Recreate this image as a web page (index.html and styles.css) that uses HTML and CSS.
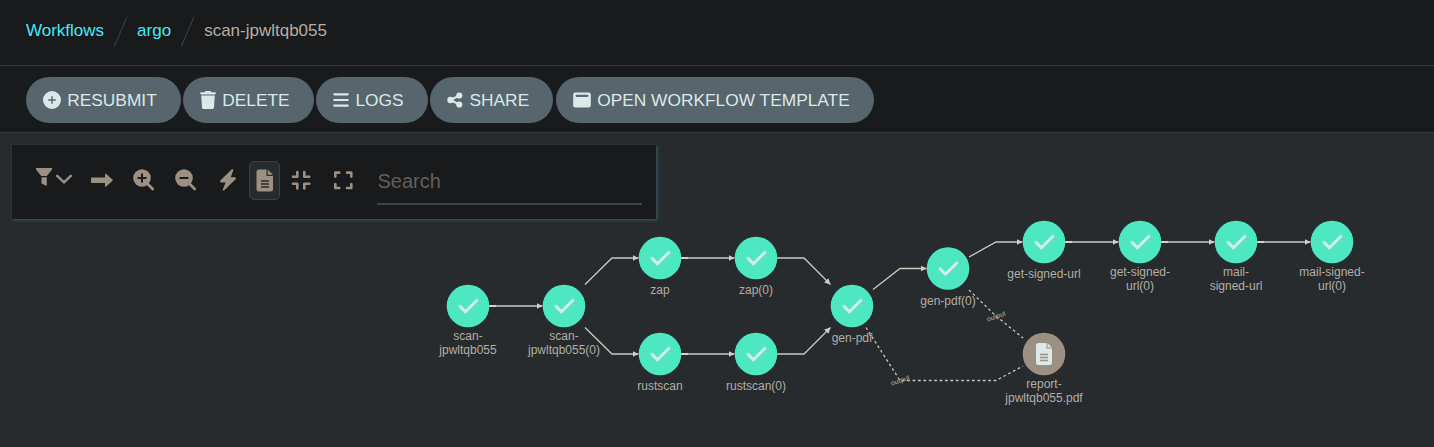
FILE: index.html
```
<!DOCTYPE html>
<html lang="en">
<head>
<meta charset="utf-8">
<title>Workflow scan-jpwltqb055</title>
<link rel="stylesheet" href="styles.css">
</head>
<body>
<header class="breadcrumbs">
  <a class="crumb crumb-link">Workflows</a>
  <svg class="slash" width="14" height="31" viewBox="0 0 14 31"><path d="M0 30 13 0"/></svg>
  <a class="crumb crumb-link">argo</a>
  <svg class="slash" width="14" height="31" viewBox="0 0 14 31"><path d="M0 30 13 0"/></svg>
  <span class="crumb">scan-jpwltqb055</span>
</header>
<nav class="actions">
  <button class="btn btn-resubmit"><svg width="18" height="18" viewBox="0 0 512 512"><path fill-rule="evenodd" d="M256 0a256 256 0 1 0 0 512A256 256 0 1 0 256 0zM236 160q0-16 20-16t20 16v76h76q16 0 16 20t-16 20h-76v76q0 16-20 16t-20-16v-76h-76q-16 0-16-20t16-20h76z"/></svg>RESUBMIT</button>
  <button class="btn btn-delete"><svg width="16" height="18" viewBox="0 0 448 512"><path d="M135.200 17.700L128 32H32C14.300 32 0 46.300 0 64S14.300 96 32 96H416c17.700 0 32-14.300 32-32s-14.300-32-32-32H320l-7.200-14.300C307.400 6.800 296.300 0 284.200 0H163.800c-12.100 0-23.200 6.800-28.600 17.700zM416 128H32L53.200 467c1.600 25.300 22.600 45 47.900 45H346.900c25.300 0 46.300-19.700 47.900-45L416 128z"/></svg>DELETE</button>
  <button class="btn btn-logs"><svg width="16" height="18" viewBox="0 0 16 18"><path d="M1.300 3.300h13.400M1.300 9h13.400M1.300 14.700h13.400" fill="none" stroke="currentColor" stroke-width="2.200" stroke-linecap="round"/></svg>LOGS</button>
  <button class="btn btn-share"><svg width="16" height="18" viewBox="0 0 16 18"><circle cx="3.500" cy="9" r="3.200"/><circle cx="12.300" cy="4.500" r="3.100"/><circle cx="12.300" cy="13.500" r="3.100"/><path d="M12.300 4.500 3.500 9l8.800 4.500" fill="none" stroke="currentColor" stroke-width="2"/></svg>SHARE</button>
  <button class="btn btn-template"><svg width="18" height="18" viewBox="0 0 18 18"><path fill-rule="evenodd" d="M2.300 1.500h13.400a2.100 2.100 0 0 1 2.100 2.100v10.900a2.100 2.100 0 0 1-2.100 2.100H2.300a2.100 2.100 0 0 1-2.100-2.100V3.600a2.100 2.100 0 0 1 2.100-2.100zM3.600 3.700a1.100 1.100 0 0 0 0 2.200h10.800a1.100 1.100 0 0 0 0-2.200z"/></svg>OPEN WORKFLOW TEMPLATE</button>
</nav>
<main class="graph">
  <svg class="dag" width="1434" height="314" viewBox="0 133 1434 314">
    <defs>
      <marker id="arrow" markerUnits="userSpaceOnUse" markerWidth="7" markerHeight="7" refX="6" refY="3" orient="auto"><path d="M0 0 6 3 0 6z" fill="#d3cec6"/></marker>
      <path id="check" class="check" d="M-8 .300-2.500 5.800 8.700-5.500"/>
      <circle id="ok" class="ok" r="21.300"/>
    </defs>
    <g class="edges">
      <path d="M489 306H542.500"/>
      <path d="M585 284.500 612 258H638.500"/>
      <path d="M585 327.500 612 354H638.500"/>
      <path d="M681 258H734.500"/>
      <path d="M681 354H734.500"/>
      <path d="M777 258H804L830.500 284.500"/>
      <path d="M777 354H804L830.500 327.500"/>
      <path d="M873 289.500 900 268.500H926.500"/>
      <path d="M969 257 996 242H1022.500"/>
      <path d="M1065 242H1118.500"/>
      <path d="M1161 242H1214.500"/>
      <path d="M1257 242H1310.500"/>
    </g>
    <path class="stubs" d="M489 306h7M681 258h7M681 354h7M1065 242h7M1161 242h7M1257 242h7"/>
    <g class="outputs">
      <path d="M866 327.500 900 380.500H996L1023 366"/>
      <path d="M969 290 996 316 1023 338"/>
    </g>
    <g class="nodes">
      <g transform="translate(468 306)"><use href="#ok"/><use href="#check"/><text y="34">scan-</text><text y="48">jpwltqb055</text></g>
      <g transform="translate(564 306)"><use href="#ok"/><use href="#check"/><text y="34">scan-</text><text y="48">jpwltqb055(0)</text></g>
      <g transform="translate(660 258)"><use href="#ok"/><use href="#check"/><text y="36">zap</text></g>
      <g transform="translate(756 258)"><use href="#ok"/><use href="#check"/><text y="36">zap(0)</text></g>
      <g transform="translate(660 354)"><use href="#ok"/><use href="#check"/><text y="36">rustscan</text></g>
      <g transform="translate(756 354)"><use href="#ok"/><use href="#check"/><text y="36">rustscan(0)</text></g>
      <g transform="translate(852 306)"><use href="#ok"/><use href="#check"/><text y="36">gen-pdf</text></g>
      <g transform="translate(948 268.500)"><use href="#ok"/><use href="#check"/><text y="36">gen-pdf(0)</text></g>
      <g transform="translate(1044 242)"><use href="#ok"/><use href="#check"/><text y="36">get-signed-url</text></g>
      <g transform="translate(1140 242)"><use href="#ok"/><use href="#check"/><text y="34">get-signed-</text><text y="48">url(0)</text></g>
      <g transform="translate(1236 242)"><use href="#ok"/><use href="#check"/><text y="34">mail-</text><text y="48">signed-url</text></g>
      <g transform="translate(1332 242)"><use href="#ok"/><use href="#check"/><text y="34">mail-signed-</text><text y="48">url(0)</text></g>
      <g transform="translate(1044 354)"><circle class="artifact" r="21.300"/><path class="doc" d="M-5.500-11H2.500V-5.500H8V8.500Q8 11 5.500 11H-5.500Q-8 11-8 8.500V-8.500Q-8-11-5.500-11zM3.500-11 8-6.500H3.500z"/><path class="doc-lines" d="M-4 .500H4M-4 3.500H4M-4 6.500H4"/><text y="34">report-</text><text y="48">jpwltqb055.pdf</text></g>
    </g>
    <g class="edge-labels">
      <text transform="translate(901 382.500) rotate(-20)">output</text>
      <text transform="translate(997 318.500) rotate(-20)">output</text>
    </g>
  </svg>
  <div class="toolbar">
    <div class="tool tool-filter"><svg width="38" height="24" viewBox="0 0 38 24"><path d="M0 0H16V1.500L10.800 8H5.200L0 1.500zM5.500 9.200H10.800V18L5.500 15.500z"/><path d="M21.200 7.800 28 14.300 34.800 7.800" fill="none" stroke="currentColor" stroke-width="2.500" stroke-linecap="round"/></svg></div>
    <div class="tool"><svg width="24" height="24" viewBox="0 0 24 24"><path d="M2 9.500H15V6.500Q15 5 16.200 6L22.500 11.500Q23 12 22.500 12.700L16.200 18.500Q15 19.300 15 18V15H2Q1 15 1 14V10.500Q1 9.500 2 9.500z"/></svg></div>
    <div class="tool"><svg width="24" height="24" viewBox="0 0 24 24"><circle cx="10" cy="10" r="8.800"/><path d="M15 15.300 20.700 21" class="handle"/><path d="M10 6.300V13.700M6.300 10H13.700" class="sign"/></svg></div>
    <div class="tool"><svg width="24" height="24" viewBox="0 0 24 24"><circle cx="10" cy="10" r="8.800"/><path d="M15 15.300 20.700 21" class="handle"/><path d="M6.300 10H13.700" class="sign"/></svg></div>
    <div class="tool"><svg width="24" height="24" viewBox="0 0 24 24"><path d="M15.600 1.500Q17.600.700 17.200 2.500L14.700 9.300H19Q20.700 9.800 19.600 11.300L8.300 22.300Q6.300 23.200 6.800 21.400L9.600 14.500H5.300Q3.300 14 4.600 12.300z"/></svg></div>
    <div class="tool tool-active"><svg width="24" height="24" viewBox="0 0 24 24"><path d="M6 .500H13.500V7H20V20Q20 22.500 17.500 22.500H6Q3.500 22.500 3.500 20V3Q3.500.500 6 .500zM14.700.500 20 5.800H14.700z"/><path d="M8 12H16M8 15H16M8 18H16" class="lines"/></svg></div>
    <div class="tool"><svg width="24" height="24" viewBox="0 0 24 24"><path class="corners" d="M8.300 4V8.800H4M15.300 4V8.800H20.300M4 15.700H8.300V20.500M15.300 20.500V15.700H20.300"/></svg></div>
    <div class="tool"><svg width="24" height="24" viewBox="0 0 24 24"><path class="corners" d="M4.300 8.600V4.600H8.300M16 4.600H20.300V8.600M4.300 16V20H8.300M16 20H20.300V16"/></svg></div>
    <input class="search" type="text" placeholder="Search">
  </div>
</main>
</body>
</html>
```
FILE: styles.css
```
* { box-sizing: border-box; }
body { margin: 0; background: #272b2d; font-family: "Liberation Sans", Arial, sans-serif; overflow: hidden; }
.breadcrumbs { display: flex; align-items: center; gap: 9.500px; height: 66px; padding: 0 26px 3px; background: #191a1b; border-bottom: 1px solid #37393b; }
.crumb { font-size: 17px; line-height: 20px; color: #b4aea4; }
.crumb-link { color: #45e9f7; }
.slash { margin-top: 2px; fill: none; stroke: #414345; }
.actions { display: flex; height: 67px; padding: 11px 26px 0; background: #191a1b; border-bottom: 1px solid #37393b; }
.btn { display: flex; align-items: center; height: 46px; margin: 0 2px 0 0; padding: 0 0 0 17px; border: 0; border-radius: 23px; background: #57656d; color: #dbe9e8; font: 17.330px "Liberation Sans", Arial, sans-serif; white-space: nowrap; }
.btn svg { flex: none; margin-right: 6.200px; margin-top: -1px; fill: currentColor; }
.btn-resubmit { width: 155px; }
.btn-delete { width: 131px; }
.btn-logs { width: 112px; padding-left: 17.300px; }
.btn-share { width: 123px; margin-right: 3px; padding-left: 17.300px; }
.btn-template { width: 318px; }
.graph { position: relative; height: 314px; }
.dag { display: block; }
.edges path { fill: none; stroke: #cdc8c0; stroke-width: 1.300; marker-end: url(#arrow); }
.stubs { stroke: #d3cec6; stroke-width: 1.800; }
.outputs path { fill: none; stroke: #cdc8c0; stroke-width: 1.300; stroke-dasharray: 2.700 2.700; }
.ok { fill: #4de8c2; }
.artifact { fill: #9c9083; }
.check { fill: none; stroke: #dbe9e8; stroke-width: 3; stroke-linecap: round; stroke-linejoin: round; }
.doc { fill: #dbe9e8; }
.doc-lines { stroke: #9c9083; stroke-width: 1.300; }
.nodes text { font-size: 12px; text-anchor: middle; fill: #b4aea4; }
.edge-labels text { font-size: 7px; text-anchor: middle; fill: #b4aea4; }
.toolbar { position: absolute; left: 12px; top: 12px; display: flex; align-items: flex-start; width: 644px; height: 74px; padding: 16px 0 0 21px; background: #191a1b; box-shadow: 1px 1px 3px #465c69; color: #9c9083; }
.tool { display: flex; flex: none; align-items: center; justify-content: center; width: 42px; height: 37px; }
.tool svg { flex: none; fill: currentColor; }
.tool-filter { width: 48px; justify-content: flex-start; padding-left: 3px; }
.tool-filter svg { margin-top: 1px; }
.tool-active { width: 31px; height: 39px; border: 1px solid #3d4245; border-radius: 5px; background: #272b2d; }
.handle { stroke: currentColor; stroke-width: 2.800; stroke-linecap: round; }
.sign { stroke: #191a1b; stroke-width: 2; stroke-linecap: round; }
.lines { stroke: #272b2d; stroke-width: 1.400; }
.corners { fill: none; stroke: currentColor; stroke-width: 2.600; stroke-linecap: round; stroke-linejoin: round; }
.search { width: 265px; height: 46px; margin: -2px 0 0 13px; padding: 0 0 0 .500px; border: 0; border-bottom: 2px solid #3d4444; background: transparent; color: #b4aea4; font: 20px "Liberation Sans", Arial, sans-serif; outline: 0; }
.search::placeholder { color: #625f5b; opacity: 1; }
```
